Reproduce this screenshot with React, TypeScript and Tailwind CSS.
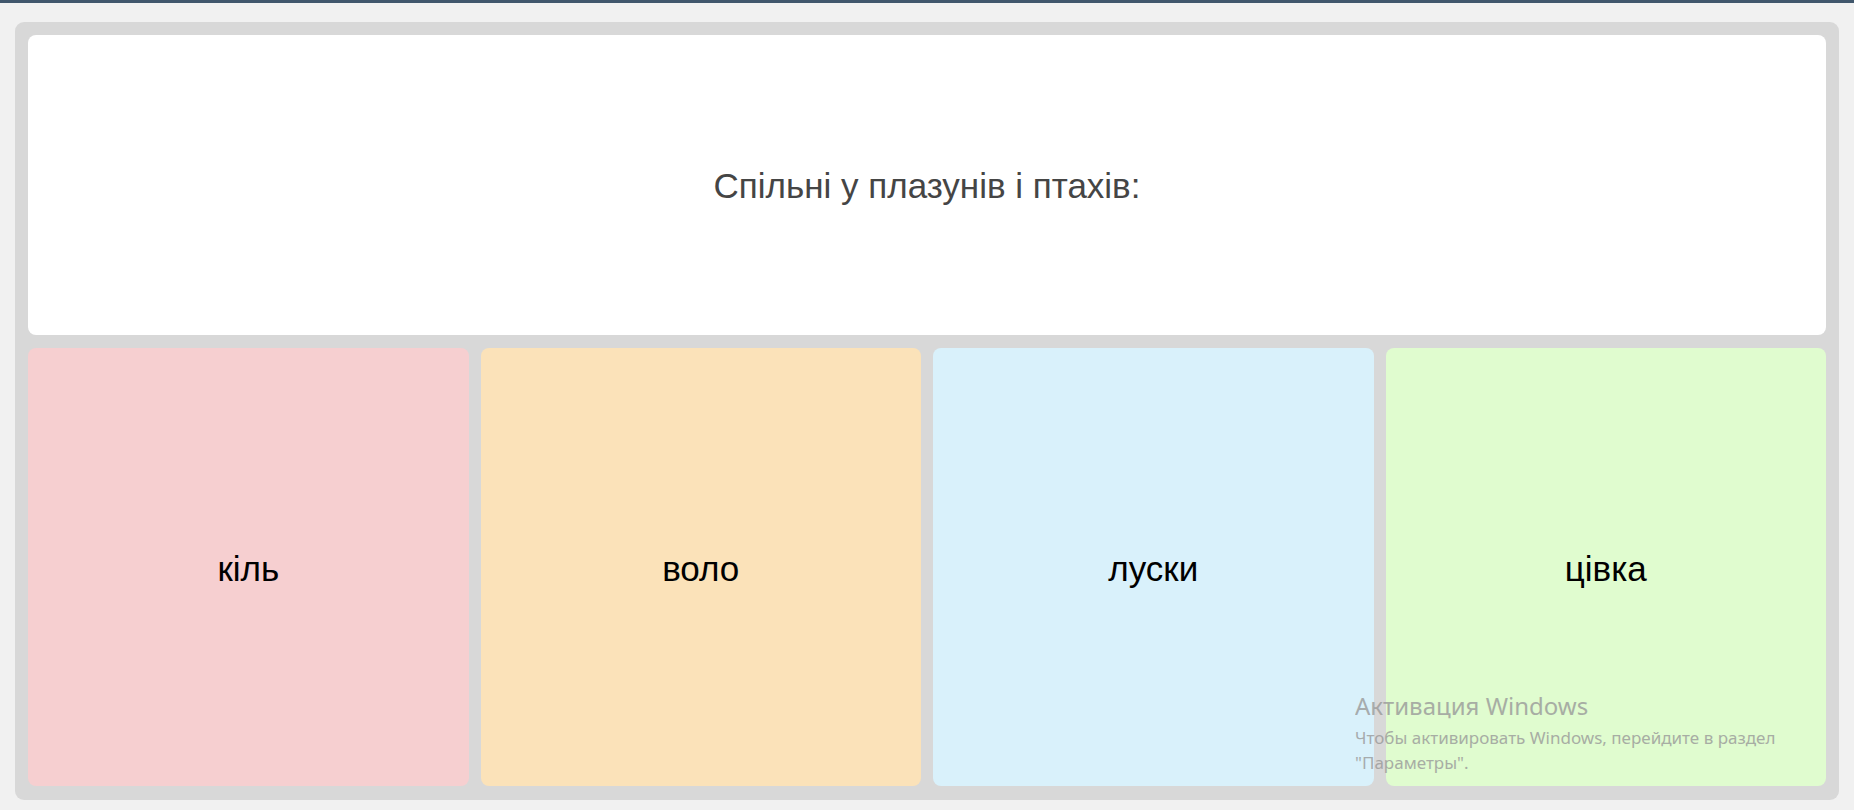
import React from "react";

const cards = [
  { label: "кіль", bg: "bg-[#f6cfd0]" },
  { label: "воло", bg: "bg-[#fbe2b9]" },
  { label: "луски", bg: "bg-[#d9f1fb]" },
  { label: "цівка", bg: "bg-[#e0fccf]" },
];

export default function App() {
  return (
    <div
      className="relative min-h-screen w-full bg-[#f1f1f1] border-t-[3px] border-[#41576c] pt-[19px] pb-[10px]"
      style={{ fontFamily: '"Liberation Sans", Arial, sans-serif' }}
    >
      <div className="mx-[15px] rounded-[9px] bg-[#d8d8d8] p-[13px] pb-[14px] flex flex-col gap-[13px]">
        <div className="h-[300px] rounded-[8px] bg-white flex items-center justify-center pt-[2px]">
          <span className="text-[35px] text-[#454545]">Спільні у плазунів і птахів:</span>
        </div>
        <div className="grid grid-cols-4 gap-[12px]">
          {cards.map((c) => (
            <div
              key={c.label}
              className={`h-[438px] rounded-[8px] ${c.bg} flex items-center justify-center pt-[4px]`}
            >
              <span className="text-[35px] text-black">{c.label}</span>
            </div>
          ))}
        </div>
      </div>
      <div
        className="pointer-events-none absolute left-[1355px] top-[688px] text-[#9a9a9a] opacity-80"
        style={{ fontFamily: '"Noto Sans", "Open Sans", sans-serif' }}
      >
        <div className="text-[24px] leading-[30px]">Активация Windows</div>
        <div className="text-[17px] leading-[25px] mt-[4px]">
          Чтобы активировать Windows, перейдите в раздел
          <br />
          "Параметры".
        </div>
      </div>
    </div>
  );
}
